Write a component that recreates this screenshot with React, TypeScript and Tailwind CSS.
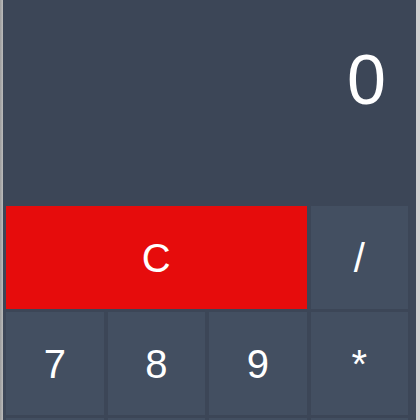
import React from "react";

const rows: string[][] = [
  ["7", "8", "9", "*"],
  ["4", "5", "6", "-"],
  ["1", "2", "3", "+"],
  ["0", ".", "=", "%"],
];

export default function App() {
  return (
    <div className="flex h-[420px] w-[420px] overflow-hidden bg-[#c6c6c6] font-['Liberation_Sans',Arial,sans-serif]">
      {/* left edge shading */}
      <div className="w-[3px] shrink-0 bg-gradient-to-r from-[#9c9c9c] to-[#bdbdbd]" />

      {/* Calculator body */}
      <div className="flex w-[413px] shrink-0 flex-col bg-[#3c4657]">
        <div className="flex h-[206px] shrink-0 justify-end pr-[30px] pt-[45px]">
          <span className="text-[70px] leading-none text-white">0</span>
        </div>

        <div className="grid grid-cols-4 gap-x-[4px] gap-y-[3px] pl-[3px] pr-[8px]">
          <button className="col-span-3 h-[103px] bg-[#e60c0c] text-[40px] text-white">C</button>
          <button className="h-[103px] bg-[#434f61] text-[40px] text-white">/</button>
          {rows.map((row) =>
            row.map((key) => (
              <button key={key} className="h-[103px] bg-[#434f61] text-[40px] text-white">
                {key}
              </button>
            ))
          )}
        </div>
      </div>

      <div className="w-[4px] shrink-0 bg-[#d0d0d0]" />
    </div>
  );
}
